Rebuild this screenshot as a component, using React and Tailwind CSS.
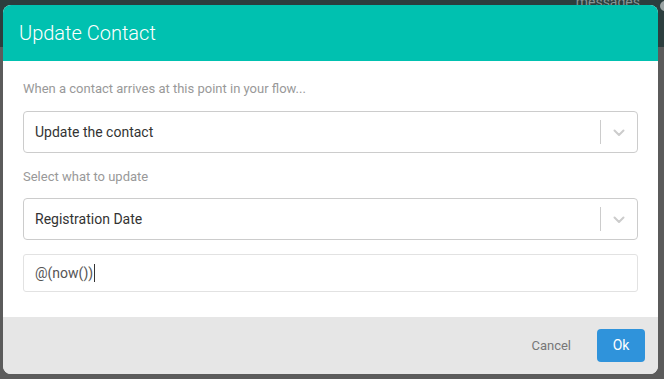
import React from "react";

function Chevron() {
  return (
    <svg width="12" height="8" viewBox="0 0 12 8" fill="none">
      <path d="M1.5 1.5 L6 6 L10.5 1.5" stroke="#cccccc" strokeWidth="2" strokeLinecap="round" strokeLinejoin="round" />
    </svg>
  );
}

function Select({ value }) {
  return (
    <div className="flex h-[42px] items-center rounded-[4px] border border-[#cccccc] bg-white">
      <div className="flex-1 pl-[11px] text-[14px] text-[#333333]">{value}</div>
      <div className="h-[24px] w-px bg-[#cccccc]" />
      <div className="flex w-[36px] items-center justify-center pt-[1px]">
        <Chevron />
      </div>
    </div>
  );
}

export default function App() {
  return (
    <div
      className="relative h-[379px] w-[664px] overflow-hidden"
      style={{ fontFamily: "Roboto, 'Liberation Sans', sans-serif" }}
    >
      <div className="flex h-full flex-col">
        <div className="flex h-[47px] justify-end bg-[#2c3e3e] pr-[24px]">
          <span className="-mt-[8px] text-[14px] text-[#8a9494]">messages</span>
        </div>
        <div className="flex-1 bg-[#5b5b5b]" />
      </div>
      <div className="absolute left-[660px] top-[1px] h-[10px] w-[10px] rounded-full bg-[#9aa3a3]" />

      <div className="absolute left-[3px] top-[5px] flex h-[369px] w-[655px] flex-col overflow-hidden rounded-[8px] bg-white">
        <div className="flex h-[56px] items-center bg-[#00c1b0] pl-[16px]">
          <h1 className="text-[20px] font-light text-white">Update Contact</h1>
        </div>
        <div className="flex flex-1 flex-col px-[20px] pt-[20px]">
          <p className="text-[13px] leading-[16px] text-[#999999]">When a contact arrives at this point in your flow...</p>
          <div className="mt-[14px]">
            <Select value="Update the contact" />
          </div>
          <p className="mt-[16px] text-[13px] leading-[16px] text-[#999999]">Select what to update</p>
          <div className="mt-[13px]">
            <Select value="Registration Date" />
          </div>
          <div className="mt-[14px] flex h-[38px] items-center rounded-[3px] border border-[#e2e2e2] pl-[11px] text-[14px] text-[#555555]">
            <span>@(now())</span>
            <span className="ml-[1px] h-[18px] w-px bg-[#333333]" />
          </div>
        </div>
        <div className="flex h-[57px] items-center justify-end gap-[26px] bg-[#e6e6e6] pr-[13px]">
          <button className="text-[13px] text-[#777777]">Cancel</button>
          <button className="h-[33px] w-[48px] rounded-[4px] bg-[#2f93db] text-[14px] text-white">Ok</button>
        </div>
      </div>
    </div>
  );
}
